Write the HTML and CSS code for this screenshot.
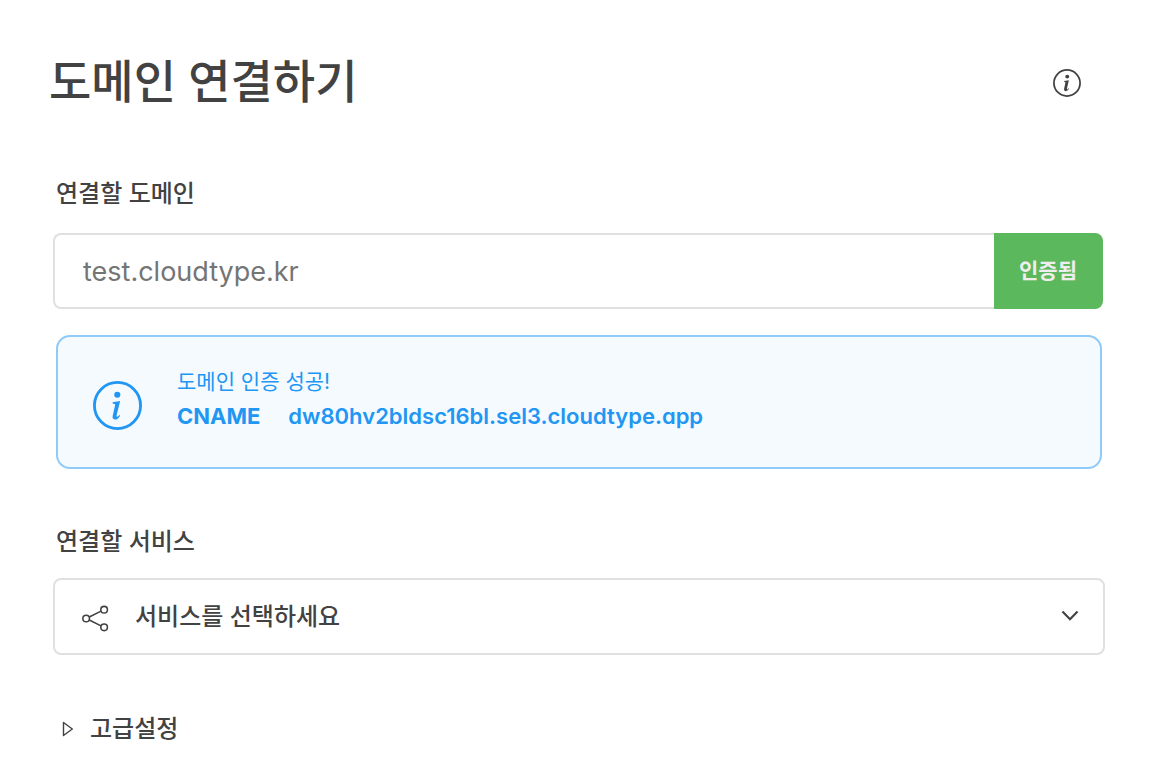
FILE: index.html
```
<!DOCTYPE html>
<html lang="ko">

<head>
    <meta charset="UTF-8" />
    <meta name="viewport" content="width=device-width, initial-scale=1.0" />
    <title>도메인 연결하기</title>
    <link rel="stylesheet" href="styles.css">
</head>

<body>
    <header class="page-header">
        <h1>도메인 연결하기</h1>
        <button class="info-button" type="button" aria-label="도움말">
            <svg class="info-icon" viewBox="0 0 48 48" aria-hidden="true">
                <circle cx="24" cy="24" r="22.4" fill="none" stroke="currentColor" stroke-width="3" />
                <circle cx="24.4" cy="13" r="3.3" fill="currentColor" />
                <path d="M19 20.5 L27.2 19.3 L24 33.2 Q23.6 35.4 24.6 35.1 Q25.4 34.8 26.6 33.2 L27.6 34 Q25 38 21.6 38 Q18.2 37.8 19 34 L21.3 23.6 Q21.6 22 19 22 Z" fill="currentColor" />
            </svg>
        </button>
    </header>

    <form class="domain-form">
        <div class="field">
            <label for="domain">연결할 도메인</label>
            <div class="domain-row">
                <input id="domain" type="text" placeholder="test.cloudtype.kr" />
                <button class="verify-button" type="button">인증됨</button>
            </div>
        </div>

        <div class="alert" role="status">
            <svg class="info-icon" viewBox="0 0 48 48" aria-hidden="true">
                <circle cx="24" cy="24" r="22.6" fill="none" stroke="currentColor" stroke-width="2.8" />
                <circle cx="23.8" cy="13.5" r="3" fill="currentColor" />
                <path d="M19.2 20.7 L26.6 19.7 L23.2 33.2 Q22.8 35.4 23.8 35.1 Q24.6 34.8 25.8 33.2 L26.6 34 Q24.2 37.8 21.6 37.8 Q18.6 37.6 19.3 34 L21.7 23.6 Q22 22 19.2 22 Z" fill="currentColor" />
            </svg>
            <div class="alert-text">
                <p>도메인 인증 성공!</p>
                <p class="record"><strong>CNAME</strong><span>dw80hv2bldsc16bl.sel3.cloudtype.app</span></p>
            </div>
        </div>

        <div class="field service-field">
            <label for="service">연결할 서비스</label>
            <div class="select-box">
                <svg class="share-icon" viewBox="0 0 26 26" fill="none" stroke="currentColor" stroke-width="1.5" aria-hidden="true">
                    <circle cx="4" cy="13" r="3.2" />
                    <circle cx="21.3" cy="4.5" r="3.2" />
                    <circle cx="21.3" cy="21.5" r="3.2" />
                    <path d="M7 11.6 L18.3 5.9 M7 14.4 L18.3 20.1" />
                </svg>
                <select id="service">
                    <option>서비스를 선택하세요</option>
                </select>
                <svg class="chevron-icon" viewBox="0 0 18 12" fill="none" stroke="currentColor" stroke-width="2.2" aria-hidden="true">
                    <path d="M1.5 1.5 L9 9.2 L16.5 1.5" />
                </svg>
            </div>
        </div>

        <details class="advanced">
            <summary>
                <svg class="caret-icon" viewBox="0 0 12 16" fill="none" stroke="currentColor" stroke-width="1.4" stroke-linejoin="round" aria-hidden="true">
                    <path d="M1.5 1.5 L10.3 8 L1.5 14.5 Z" />
                </svg>
                고급설정
            </summary>
        </details>
    </form>
</body>

</html>
```
FILE: styles.css
```
* {
    box-sizing: border-box;
}

body {
    margin: 0;
    padding: 50px 49px 24px;
    background: #fff;
    color: #424242;
    font-family: Inter, 'Noto Sans CJK KR', sans-serif;
    font-size: 24px;
    font-weight: 500;
    line-height: 36px;
}

button,
input,
select {
    font-family: inherit;
    color: inherit;
}

.page-header {
    display: flex;
    align-items: center;
    justify-content: space-between;
    padding-right: 24px;
}

h1 {
    margin: 0;
    font-size: 46px;
    font-weight: 500;
    line-height: 62px;
}

.info-button {
    display: flex;
    margin-top: 4px;
    padding: 0;
    border: none;
    background: none;
    cursor: pointer;
}

.info-button .info-icon {
    width: 28px;
    height: 28px;
}

.domain-form {
    margin-top: 64px;
    padding-left: 4px;
}

.field label {
    display: block;
    margin-bottom: 21px;
    padding-left: 3px;
}

.domain-row {
    display: flex;
    height: 76px;
    margin-right: 2px;
}

.domain-row input {
    flex: 1;
    min-width: 0;
    padding: 0 28px;
    border: 2px solid #e0e0e0;
    border-right: none;
    border-radius: 8px 0 0 8px;
    font-size: 27px;
}

.domain-row input::placeholder {
    color: #757575;
}

.verify-button {
    padding: 0 26px 4px 25px;
    border: none;
    border-radius: 0 8px 8px 0;
    background: #5cb85c;
    color: #eee;
    font-size: 21px;
    font-weight: 700;
    cursor: pointer;
}

.alert {
    display: flex;
    align-items: center;
    gap: 35px;
    margin: 26px 3px 0;
    padding: 27px 35px 33px;
    border: 2px solid #90caf9;
    border-radius: 14px;
    background: #f5faff;
    color: #2196f3;
    font-size: 21px;
    font-weight: 400;
}

.alert .info-icon {
    width: 49px;
    height: 49px;
    margin-top: 12px;
}

.alert p {
    margin: 0;
    line-height: 35px;
}

.record {
    display: flex;
    gap: 28px;
    font-size: 22px;
    font-weight: 600;
}

.record strong {
    font-weight: 700;
}

.record span {
    font-feature-settings: 'cv11';
}

.service-field {
    margin-top: 55px;
}

.service-field label {
    margin-bottom: 18px;
}

.select-box {
    position: relative;
}

.select-box select {
    width: 100%;
    height: 77px;
    padding: 0 80px;
    border: 2px solid #e0e0e0;
    border-radius: 8px;
    background: #fff;
    font-size: 24px;
    font-weight: 500;
    appearance: none;
}

/* icons sit on top of the select */
.share-icon,
.chevron-icon {
    position: absolute;
    pointer-events: none;
}

.share-icon {
    top: 27px;
    left: 29px;
    width: 27px;
    height: 27px;
}

.chevron-icon {
    top: 32px;
    right: 26px;
    width: 18px;
    height: 12px;
}

.advanced {
    margin-top: 56px;
    padding-left: 9px;
}

.advanced summary {
    display: flex;
    align-items: center;
    gap: 16px;
    list-style: none;
    cursor: pointer;
}

.caret-icon {
    width: 12px;
    height: 16px;
}
```
